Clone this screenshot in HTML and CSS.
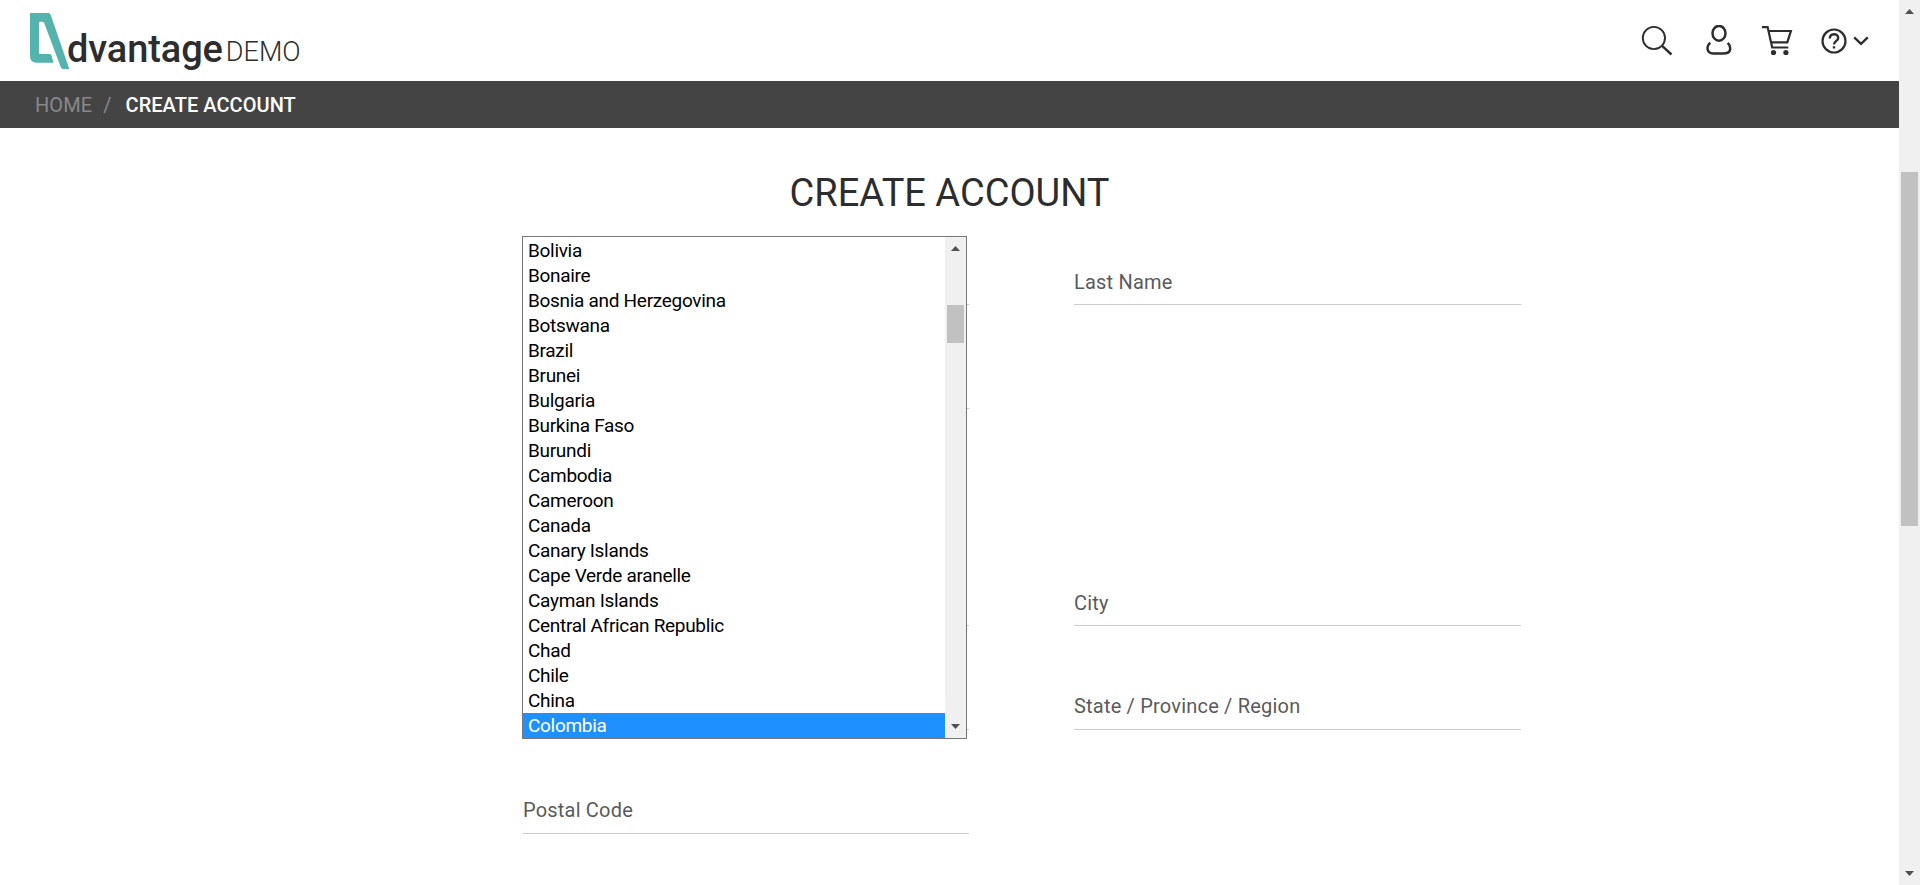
FILE: index.html
```html
<!DOCTYPE html>
<html lang="en">
<head>
<meta charset="utf-8">
<title>Advantage Shopping</title>
<link rel="stylesheet" href="styles.css">
</head>
<body>
<div class="page">
  <header class="header">
    <a class="logo">
      <svg class="logo-mark" width="40" height="58" viewBox="0 0 40 58"><path fill="#55b3ae" fill-rule="evenodd" d="M0 0H18.5Q20 0 20.7 1.800L39.300 56H33.500Q31.500 56 30.500 53.500L14.300 10.300Q13.800 8.700 12.500 8.700H10Q9 8.700 9 10V41H19.500Q21 41 21.600 42.500L23.500 49.700H6Q0 49 0 43Z"/></svg>
      <span class="logo-name">dvantage</span><span class="logo-demo">DEMO</span>
    </a>
    <nav class="tools">
      <svg width="32" height="32" viewBox="0 0 32 32" fill="none" stroke="#2d2d2d" stroke-width="1.900"><circle cx="12.900" cy="13" r="11.100"/><path d="M20.800 20.600L30.500 29.500" stroke-width="2.400"/></svg>
      <svg width="26" height="32" viewBox="0 0 26 32" fill="none" stroke="#2d2d2d" stroke-width="2.500"><ellipse cx="13" cy="8.300" rx="6.500" ry="7.400"/><path d="M4.300 17.800C1.500 20 1.300 23.500 1.800 25C2.500 27.800 4.500 28.500 8 28.500H17C21.500 28.500 23.500 27.800 24 25C24.500 22.500 24 20 21.700 17.800"/></svg>
      <svg width="31" height="32" viewBox="0 0 31 32" fill="none" stroke="#2d2d2d" stroke-width="2.200"><path d="M0 2.100H5.600L10.200 22.500H26.300M6.300 6H28.900L25.300 17.400H9.100"/><circle cx="11.500" cy="27.500" r="2.600" fill="#2d2d2d" stroke="none"/><circle cx="23.900" cy="27.500" r="2.600" fill="#2d2d2d" stroke="none"/></svg>
      <span class="help">
        <svg width="26" height="26" viewBox="0 0 26 26" fill="none" stroke="#2d2d2d" stroke-width="2.200"><circle cx="13" cy="13" r="11.500"/><path d="M8.800 10.600C8.800 5 17.200 5 17.200 9.900C17.200 12.800 13 13 13 16.600M13 18.200V20.600" stroke-width="2.400"/></svg>
        <svg width="16" height="10" viewBox="0 0 16 10" fill="none" stroke="#2d2d2d" stroke-width="2.300"><path d="M1.200 1.300L8 7.800L14.800 1.300"/></svg>
      </span>
    </nav>
  </header>
  <nav class="crumbs"><a class="crumb-home">HOME</a><span class="crumb-sep">/</span><span class="crumb-current">CREATE ACCOUNT</span></nav>
  <main class="main">
    <h1 class="title">CREATE ACCOUNT</h1>
    <form class="form">
      <div class="field"></div><div class="field">Last Name</div>
      <div class="field"></div><div class="gap"></div>
      <div class="field field-section"></div><div class="field field-section">City</div>
      <div class="field"></div><div class="field">State / Province / Region</div>
      <div class="field">Postal Code</div><div class="gap"></div>
      <div class="dropdown">
        <ul class="options">
          <li>Bolivia</li><li>Bonaire</li><li>Bosnia and Herzegovina</li><li>Botswana</li><li>Brazil</li><li>Brunei</li><li>Bulgaria</li><li>Burkina Faso</li><li>Burundi</li><li>Cambodia</li><li>Cameroon</li><li>Canada</li><li>Canary Islands</li><li>Cape Verde aranelle</li><li>Cayman Islands</li><li>Central African Republic</li><li>Chad</li><li>Chile</li><li>China</li><li class="selected">Colombia</li>
        </ul>
        <div class="scrollbar list-scroll">
          <svg width="9" height="5" viewBox="0 0 9 5"><path fill="#505050" d="M4.500 0L9 5H0Z"/></svg>
          <span class="thumb"></span>
          <svg width="9" height="5" viewBox="0 0 9 5"><path fill="#505050" d="M0 0H9L4.500 5Z"/></svg>
        </div>
      </div>
    </form>
  </main>
</div>
<div class="scrollbar page-scroll">
  <svg width="9" height="5" viewBox="0 0 9 5"><path fill="#505050" d="M4.500 0L9 5H0Z"/></svg>
  <span class="thumb"></span>
  <svg width="9" height="5" viewBox="0 0 9 5"><path fill="#505050" d="M0 0H9L4.500 5Z"/></svg>
</div>
</body>
</html>
```
FILE: styles.css
```css
* { box-sizing: border-box; }
body { margin: 0; display: flex; height: 885px; overflow: hidden; background: #fff; color: #2d2d2d; font-family: Roboto, "Liberation Sans", sans-serif; }
.page { flex: 1; }
.header { height: 81px; display: flex; justify-content: space-between; padding: 0 30px 0 30px; }
.logo { display: flex; align-items: flex-start; padding-top: 13px; }
.logo-mark { margin-right: -3px; }
.logo-name { font-size: 38px; font-weight: 500; line-height: 44px; letter-spacing: -.1px; margin-top: 14px; }
.logo-demo { font-size: 27px; font-weight: 300; line-height: 32px; margin: 23px 0 0 3px; }
.tools { display: flex; align-items: flex-start; padding-top: 25px; }
.tools > svg:nth-child(1) { margin-right: 33px; }
.tools > svg:nth-child(2) { margin-right: 30px; }
.tools > svg:nth-child(3) { margin-right: 28px; }
.help { display: flex; align-items: center; gap: 6px; padding-top: 3px; }
.crumbs { height: 47px; display: flex; align-items: center; padding-left: 35px; background: #444; color: #fff; font-size: 20px; }
.crumb-home { color: #888; letter-spacing: .1px; }
.crumb-sep { color: #888; margin: 0 14px 0 11px; }
.crumb-current { font-weight: 500; letter-spacing: .05px; }
.title { margin: 0; padding-top: 41px; height: 132px; text-align: center; font-size: 38px; line-height: 48px; font-weight: 400; }
.form { position: relative; display: grid; grid-template-columns: 446px 447px; column-gap: 105px; width: 998px; margin-left: 523px; }
.field { height: 104px; padding-top: 68px; border-bottom: 1px solid #ccc; color: #5a5a5a; font-size: 20px; line-height: 24px; letter-spacing: .2px; }
.form > .field:nth-child(-n+2) { height: 45px; padding-top: 10px; }
.form > .field-section { height: 217px; padding-top: 182px; }
.dropdown { position: absolute; left: -1px; top: -24px; width: 445px; height: 503px; display: flex; border: 1px solid #767676; background: #fff; }
.options { flex: 1; list-style: none; margin: 0; padding: 1px 0 0; color: #000; font-size: 19px; line-height: 25px; letter-spacing: -.3px; }
.options li { height: 25px; padding-left: 5px; white-space: nowrap; }
.options .selected { background: #1e90ff; color: #fff; }
.scrollbar { width: 21px; display: flex; flex-direction: column; align-items: center; background: #f0f0f0; }
.scrollbar svg:last-child { margin-top: auto; }
.thumb { width: 17px; background: #c1c1c1; }
.list-scroll { padding: 9px 0; }
.list-scroll .thumb { height: 38px; margin-top: 54px; }
.page-scroll { padding: 9px 0; }
.page-scroll .thumb { height: 354px; margin-top: 158px; }
```
